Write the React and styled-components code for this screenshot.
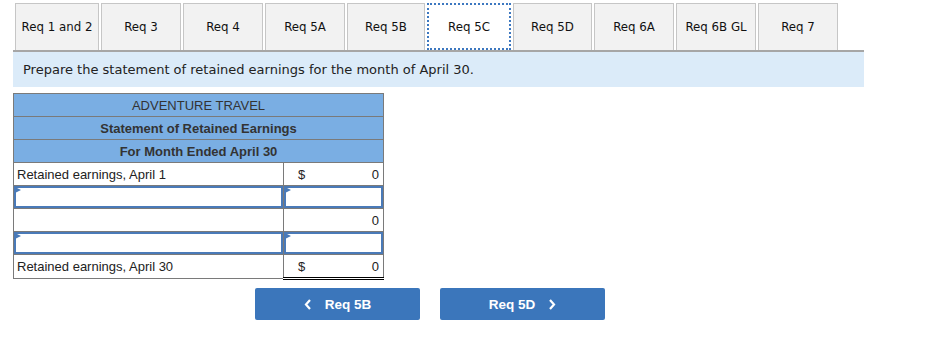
import React from "react";
import styled, { createGlobalStyle } from "styled-components";

const Global = createGlobalStyle`
  html, body { margin: 0; padding: 0; background: #fff; }
  body { font-family: "DejaVu Sans", Verdana, sans-serif; }
`;

const Page = styled.div`
  padding: 3px 0 0 13px;
  width: 851px;
`;

const TabBar = styled.div`
  display: flex;
  gap: 2px;
  padding-left: 2px;
  border-bottom: 2px solid #a6a6a6;
  height: 47px;
  box-sizing: content-box;
`;

const Tab = styled.div`
  box-sizing: border-box;
  width: ${(p) => p.$w}px;
  height: 47px;
  display: flex;
  align-items: center;
  justify-content: center;
  font-family: "DejaVu Sans", Verdana, sans-serif;
  font-size: 11.8px;
  color: #111;
  background: ${(p) => (p.$active ? "#fff" : "#f2f2f2")};
  border: ${(p) => (p.$active ? "2px dotted #3d78c0" : "1px solid #c6c6c6")};
  border-bottom: ${(p) => (p.$active ? "2px dotted #3d78c0" : "none")};
`;

const Banner = styled.div`
  background: #dbebf9;
  height: 35px;
  display: flex;
  align-items: center;
  padding-left: 10px;
  font-family: "DejaVu Sans", Verdana, sans-serif;
  font-size: 13px;
  color: #222;
`;

const Table = styled.table`
  margin-top: 6px;
  border-collapse: collapse;
  width: 370px;
  table-layout: fixed;
  font-family: "Liberation Sans", Arial, sans-serif;
  font-size: 13px;
  color: #222;
`;

const HeadCell = styled.td`
  background: #7aaee3;
  border: 1px solid #7a7a7a;
  height: 22px;
  padding: 0;
  text-align: center;
  font-weight: ${(p) => (p.$light ? "normal" : "bold")};
  color: #333;
`;

const LabelCell = styled.td`
  border: 1px solid #7a7a7a;
  height: 22px;
  padding: 0 0 0 3px;
  white-space: nowrap;
`;

const AmountCell = styled.td`
  border: 1px solid #7a7a7a;
  border-top: ${(p) => (p.$topRule ? "1px solid #000" : "1px solid #7a7a7a")};
  border-bottom: ${(p) => (p.$double ? "3px double #000" : "1px solid #7a7a7a")};
  height: 22px;
  padding: 0 4px 0 14px;
`;

const AmountInner = styled.div`
  display: flex;
  justify-content: space-between;
`;

const InputCell = styled.td`
  border: 1px solid #7a7a7a;
  padding: 0;
  height: 22px;
`;

const InputBox = styled.div`
  position: relative;
  box-sizing: border-box;
  height: 22px;
  margin: 0;
  border: 2px solid #4a7ab8;
  background: #fff;
  &::before {
    content: "";
    position: absolute;
    left: -1px;
    top: -1px;
    border-left: 6px solid #4a7ab8;
    border-top: 3px solid transparent;
    border-bottom: 3px solid transparent;
  }
`;

const NavRow = styled.div`
  display: flex;
  gap: 20px;
  margin: 8px 0 0 242px;
`;

const NavButton = styled.button`
  width: 165px;
  height: 32px;
  border: none;
  border-radius: 2px;
  background: #3b76bb;
  color: #fff;
  font-family: "Liberation Sans", Arial, sans-serif;
  font-size: 13.5px;
  font-weight: bold;
  display: flex;
  align-items: center;
  justify-content: center;
  gap: 13px;
  padding: 0;
`;

const Chevron = styled.svg`
  width: 8px;
  height: 11px;
`;

const tabs = [
  ["Req 1 and 2", 84],
  ["Req 3", 80],
  ["Req 4", 80],
  ["Req 5A", 80],
  ["Req 5B", 78],
  ["Req 5C", 84, true],
  ["Req 5D", 79],
  ["Req 6A", 80],
  ["Req 6B GL", 80],
  ["Req 7", 80],
];

const Left = () => (
  <Chevron viewBox="0 0 8 11">
    <path d="M6 1 L2 5.5 L6 10" fill="none" stroke="#fff" strokeWidth="2.2" />
  </Chevron>
);
const Right = () => (
  <Chevron viewBox="0 0 8 11">
    <path d="M2 1 L6 5.5 L2 10" fill="none" stroke="#fff" strokeWidth="2.2" />
  </Chevron>
);

export default function App() {
  return (
    <>
      <Global />
      <Page>
        <TabBar>
          {tabs.map(([t, w, a]) => (
            <Tab key={t} $w={w} $active={a}>
              {t}
            </Tab>
          ))}
        </TabBar>
        <Banner>Prepare the statement of retained earnings for the month of April 30.</Banner>
        <Table>
          <colgroup>
            <col style={{ width: 270 }} />
            <col style={{ width: 100 }} />
          </colgroup>
          <tbody>
            <tr>
              <HeadCell colSpan={2} $light>ADVENTURE TRAVEL</HeadCell>
            </tr>
            <tr>
              <HeadCell colSpan={2}>Statement of Retained Earnings</HeadCell>
            </tr>
            <tr>
              <HeadCell colSpan={2}>For Month Ended April 30</HeadCell>
            </tr>
            <tr>
              <LabelCell>Retained earnings, April 1</LabelCell>
              <AmountCell>
                <AmountInner><span>$</span><span>0</span></AmountInner>
              </AmountCell>
            </tr>
            <tr>
              <InputCell><InputBox /></InputCell>
              <InputCell><InputBox /></InputCell>
            </tr>
            <tr>
              <LabelCell />
              <AmountCell $topRule>
                <AmountInner><span /><span>0</span></AmountInner>
              </AmountCell>
            </tr>
            <tr>
              <InputCell><InputBox /></InputCell>
              <InputCell><InputBox /></InputCell>
            </tr>
            <tr>
              <LabelCell>Retained earnings, April 30</LabelCell>
              <AmountCell $topRule $double>
                <AmountInner><span>$</span><span>0</span></AmountInner>
              </AmountCell>
            </tr>
          </tbody>
        </Table>
        <NavRow>
          <NavButton><Left /> Req 5B</NavButton>
          <NavButton>Req 5D <Right /></NavButton>
        </NavRow>
      </Page>
    </>
  );
}
